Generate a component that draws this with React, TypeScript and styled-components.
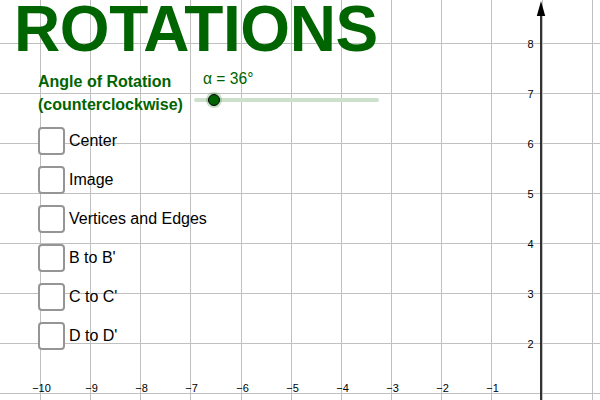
import React from 'react';
import styled, { createGlobalStyle } from 'styled-components';

const GlobalStyle = createGlobalStyle`
  html, body {
    margin: 0;
    padding: 0;
    background: #ffffff;
  }
  body {
    font-family: "Liberation Sans", Arial, sans-serif;
  }
`;

const GREEN = '#006400';

const Stage = styled.div`
  position: relative;
  width: 600px;
  height: 400px;
  overflow: hidden;
  background: #ffffff;
`;

const GraphLayer = styled.svg`
  position: absolute;
  inset: 0;
  width: 600px;
  height: 400px;
`;

const Panel = styled.div`
  position: relative;
  display: flex;
  flex-direction: column;
  align-items: flex-start;
`;

const Title = styled.h1`
  margin: 0 0 12px 14px;
  height: 58px;
  font-size: 64px;
  line-height: 58px;
  font-weight: 700;
  letter-spacing: -0.4px;
  color: ${GREEN};
`;

const AngleRow = styled.div`
  display: flex;
  align-items: flex-start;
  margin-left: 38px;
`;

const AngleLabel = styled.div`
  width: 156px;
  font-size: 16px;
  line-height: 23px;
  font-weight: 700;
  color: ${GREEN};
`;

const Slider = styled.div`
  display: flex;
  flex-direction: column;
  width: 185px;
`;

const SliderValue = styled.div`
  margin-left: 9px;
  font-size: 15.6px;
  line-height: 18px;
  color: ${GREEN};
`;

const Track = styled.div`
  position: relative;
  margin-top: 10px;
  height: 4px;
  border-radius: 2px;
  background: #cce0cc;
`;

const Knob = styled.div<{ $pos: number }>`
  position: absolute;
  top: 50%;
  left: ${p => p.$pos}px;
  width: 16px;
  height: 16px;
  margin: -8px 0 0 -8px;
  border-radius: 50%;
  background: rgba(0, 100, 0, 0.22);
  display: flex;
  align-items: center;
  justify-content: center;

  &::after {
    content: '';
    width: 10px;
    height: 10px;
    border-radius: 50%;
    background: ${GREEN};
    border: 1px solid #000;
  }
`;

const Checks = styled.div`
  display: flex;
  flex-direction: column;
  gap: 11px;
  margin: 11px 0 0 38px;
`;

const CheckRow = styled.label`
  display: flex;
  align-items: center;
  height: 28px;
  gap: 4px;
  font-size: 16px;
  color: #000;
`;

const Box = styled.span`
  box-sizing: border-box;
  width: 27px;
  height: 28px;
  border: 2px solid #959595;
  border-radius: 4px;
  background: #fff;
`;

const items = ['Center', 'Image', 'Vertices and Edges', "B to B'", "C to C'", "D to D'"];

const STEP = 50.15;
const xLine = (k: number) => Math.round(40 + STEP * k) + 0.5;
const yLine = (k: number) => 43.5 + 50 * k;

const Graph = () => (
  <GraphLayer viewBox="0 0 600 400">
    {Array.from({ length: 12 }, (_, k) => (
      <line key={'v' + k} x1={xLine(k)} y1={0} x2={xLine(k)} y2={400} stroke="#c0c0c0" strokeWidth={1} />
    ))}
    {Array.from({ length: 8 }, (_, k) => (
      <line key={'h' + k} x1={0} y1={yLine(k)} x2={600} y2={yLine(k)} stroke="#c0c0c0" strokeWidth={1} />
    ))}
    <line x1={541} y1={12} x2={541} y2={400} stroke="#000" strokeWidth={1.6} />
    <polygon points="541,1 536.8,16 545.2,16" fill="#000" />
    {Array.from({ length: 7 }, (_, k) => (
      <text key={'y' + k} x={533.5} y={yLine(k) + 4.2} fontSize={11} textAnchor="end"
        fontFamily="Liberation Sans, Arial, sans-serif" fill="#000">{8 - k}</text>
    ))}
    {Array.from({ length: 10 }, (_, k) => (
      <text key={'x' + k} x={xLine(k) + 1} y={392} fontSize={11} textAnchor="middle"
        fontFamily="Liberation Sans, Arial, sans-serif" fill="#000">{'\u2212' + (10 - k)}</text>
    ))}
  </GraphLayer>
);

export default function App() {
  return (
    <>
      <GlobalStyle />
      <Stage>
        <Graph />
        <Panel>
          <Title>ROTATIONS</Title>
          <AngleRow>
            <AngleLabel>Angle of Rotation<br />(counterclockwise)</AngleLabel>
            <Slider>
              <SliderValue>α = 36°</SliderValue>
              <Track><Knob $pos={20} /></Track>
            </Slider>
          </AngleRow>
          <Checks>
            {items.map(t => (
              <CheckRow key={t}><Box />{t}</CheckRow>
            ))}
          </Checks>
        </Panel>
      </Stage>
    </>
  );
}
